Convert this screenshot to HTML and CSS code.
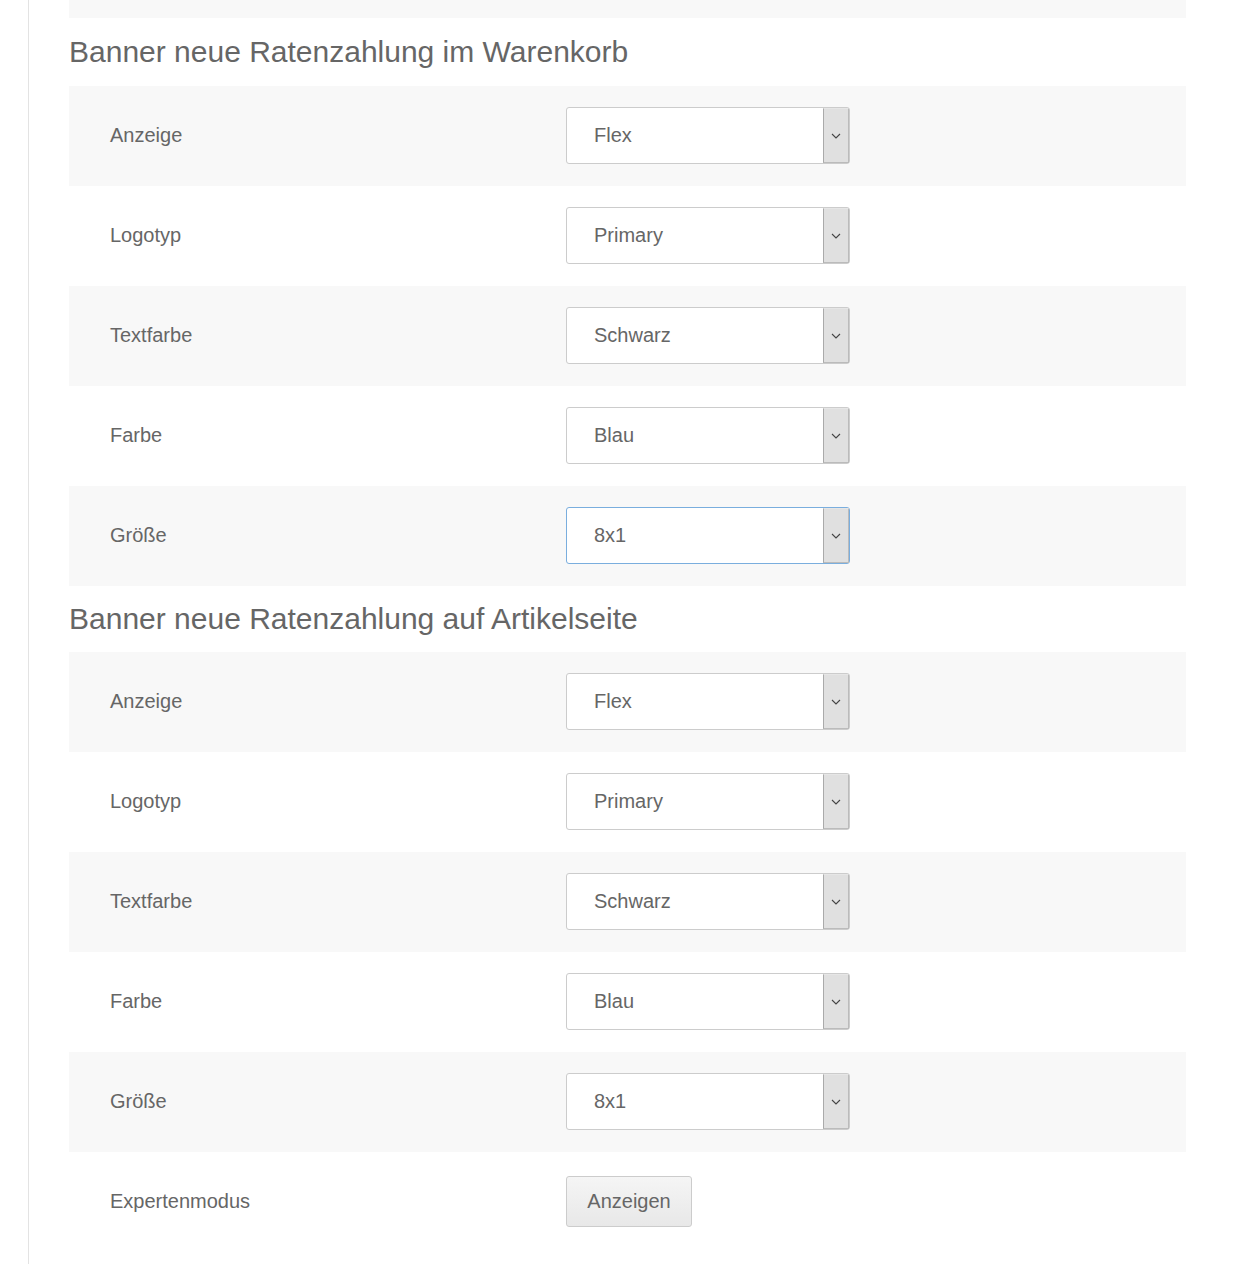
FILE: index.html
```html
<!DOCTYPE html>
<html lang="de">
<head>
<meta charset="utf-8">
<link rel="stylesheet" href="styles.css">
</head>
<body>
<div class="page">
  <div class="content">
    <div class="row-top"></div>

    <h2 class="heading first">Banner neue Ratenzahlung im Warenkorb</h2>
    <div class="group">
      <div class="row"><div class="label">Anzeige</div><div class="field"><div class="select"><span class="value">Flex</span><span class="arrow"><svg width="10" height="6" viewBox="0 0 10 6"><path d="M1 1l4 4 4-4" fill="none" stroke="#444" stroke-width="1.1"/></svg></span></div></div></div>
      <div class="row"><div class="label">Logotyp</div><div class="field"><div class="select"><span class="value">Primary</span><span class="arrow"><svg width="10" height="6" viewBox="0 0 10 6"><path d="M1 1l4 4 4-4" fill="none" stroke="#444" stroke-width="1.1"/></svg></span></div></div></div>
      <div class="row"><div class="label">Textfarbe</div><div class="field"><div class="select"><span class="value">Schwarz</span><span class="arrow"><svg width="10" height="6" viewBox="0 0 10 6"><path d="M1 1l4 4 4-4" fill="none" stroke="#444" stroke-width="1.1"/></svg></span></div></div></div>
      <div class="row"><div class="label">Farbe</div><div class="field"><div class="select"><span class="value">Blau</span><span class="arrow"><svg width="10" height="6" viewBox="0 0 10 6"><path d="M1 1l4 4 4-4" fill="none" stroke="#444" stroke-width="1.1"/></svg></span></div></div></div>
      <div class="row"><div class="label">Größe</div><div class="field"><div class="select focused"><span class="value">8x1</span><span class="arrow"><svg width="10" height="6" viewBox="0 0 10 6"><path d="M1 1l4 4 4-4" fill="none" stroke="#444" stroke-width="1.1"/></svg></span></div></div></div>
    </div>

    <h2 class="heading">Banner neue Ratenzahlung auf Artikelseite</h2>
    <div class="group">
      <div class="row"><div class="label">Anzeige</div><div class="field"><div class="select"><span class="value">Flex</span><span class="arrow"><svg width="10" height="6" viewBox="0 0 10 6"><path d="M1 1l4 4 4-4" fill="none" stroke="#444" stroke-width="1.1"/></svg></span></div></div></div>
      <div class="row"><div class="label">Logotyp</div><div class="field"><div class="select"><span class="value">Primary</span><span class="arrow"><svg width="10" height="6" viewBox="0 0 10 6"><path d="M1 1l4 4 4-4" fill="none" stroke="#444" stroke-width="1.1"/></svg></span></div></div></div>
      <div class="row"><div class="label">Textfarbe</div><div class="field"><div class="select"><span class="value">Schwarz</span><span class="arrow"><svg width="10" height="6" viewBox="0 0 10 6"><path d="M1 1l4 4 4-4" fill="none" stroke="#444" stroke-width="1.1"/></svg></span></div></div></div>
      <div class="row"><div class="label">Farbe</div><div class="field"><div class="select"><span class="value">Blau</span><span class="arrow"><svg width="10" height="6" viewBox="0 0 10 6"><path d="M1 1l4 4 4-4" fill="none" stroke="#444" stroke-width="1.1"/></svg></span></div></div></div>
      <div class="row"><div class="label">Größe</div><div class="field"><div class="select"><span class="value">8x1</span><span class="arrow"><svg width="10" height="6" viewBox="0 0 10 6"><path d="M1 1l4 4 4-4" fill="none" stroke="#444" stroke-width="1.1"/></svg></span></div></div></div>
      <div class="row"><div class="label">Expertenmodus</div><div class="field"><button class="btn" type="button">Anzeigen</button></div></div>
    </div>
  </div>
</div>
</body>
</html>
```

FILE: styles.css
```css
html, body {
  margin: 0;
  padding: 0;
  background: #fff;
}
body {
  font-family: "Liberation Sans", Arial, sans-serif;
  color: #666;
}
.page {
  margin-left: 28px;
  border-left: 1px solid #e3e3e3;
  min-height: 1264px;
  box-sizing: border-box;
  padding: 0 52px 0 40px;
}
.content {
  width: 1117px;
}
.row-top {
  height: 18px;
  background: #f8f8f8;
}
.heading {
  margin: 0;
  height: 66px;
  box-sizing: border-box;
  padding-top: 16px;
  font-size: 30px;
  font-weight: normal;
  line-height: 34px;
  color: #666;
}
.heading.first {
  height: 68px;
  padding-top: 17px;
}
.group .row {
  display: flex;
  align-items: center;
  height: 100px;
  box-sizing: border-box;
  padding-bottom: 1px;
}
.group .row:nth-child(odd) {
  background: #f8f8f8;
}
.label {
  width: 497px;
  padding-left: 41px;
  box-sizing: border-box;
  font-size: 20px;
  color: #666;
}
.field {
  display: flex;
  align-items: center;
}
.select {
  width: 284px;
  height: 57px;
  box-sizing: border-box;
  border: 1px solid #ccc;
  border-radius: 3px;
  background: #fff;
  display: flex;
  align-items: stretch;
}
.select.focused {
  border-color: #7aaede;
}
.value {
  flex: 1;
  display: flex;
  align-items: center;
  padding-left: 27px;
  font-size: 20px;
  color: #666;
}
.arrow {
  width: 24px;
  background: #e0e0e0;
  border-left: 1px solid #aaa;
  border-right: 1px solid #bbb;
  border-top: 1px solid #e6e6e6;
  border-bottom: 1px solid #bbb;
  display: flex;
  align-items: center;
  justify-content: center;
}
.btn {
  width: 126px;
  height: 51px;
  border: 1px solid #ccc;
  border-radius: 3px;
  background: linear-gradient(#f5f5f5, #e8e8e8);
  font-family: "Liberation Sans", Arial, sans-serif;
  font-size: 20px;
  color: #666;
  padding: 0;
}
```
